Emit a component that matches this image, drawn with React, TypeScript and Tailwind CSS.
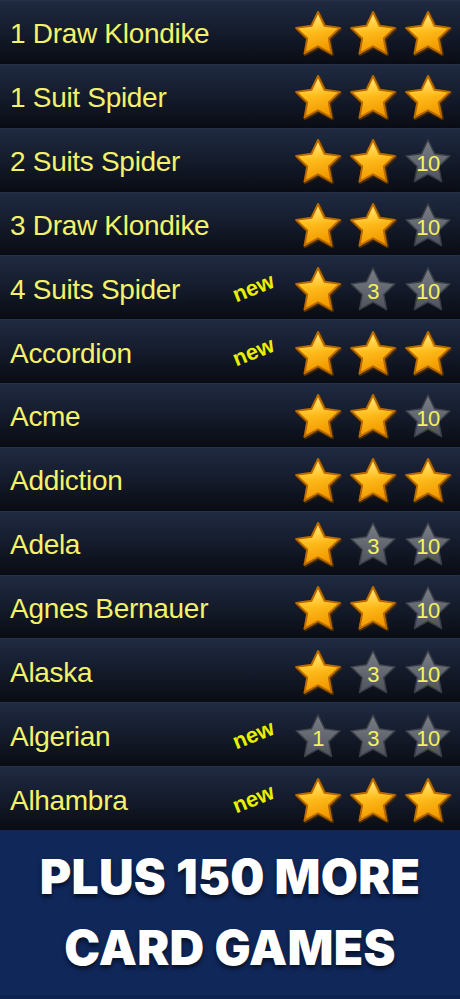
import React from "react";

type StarVal = "g" | number;

const rows: { name: string; isNew?: boolean; stars: StarVal[] }[] = [
  { name: "1 Draw Klondike", stars: ["g", "g", "g"] },
  { name: "1 Suit Spider", stars: ["g", "g", "g"] },
  { name: "2 Suits Spider", stars: ["g", "g", 10] },
  { name: "3 Draw Klondike", stars: ["g", "g", 10] },
  { name: "4 Suits Spider", isNew: true, stars: ["g", 3, 10] },
  { name: "Accordion", isNew: true, stars: ["g", "g", "g"] },
  { name: "Acme", stars: ["g", "g", 10] },
  { name: "Addiction", stars: ["g", "g", "g"] },
  { name: "Adela", stars: ["g", 3, 10] },
  { name: "Agnes Bernauer", stars: ["g", "g", 10] },
  { name: "Alaska", stars: ["g", 3, 10] },
  { name: "Algerian", isNew: true, stars: [1, 3, 10] },
  { name: "Alhambra", isNew: true, stars: ["g", "g", "g"] },
];

const STAR =
  "50,4 63.8,32.8 95.6,37.2 72.4,59.3 78.2,90.8 50,75.5 21.8,90.8 27.6,59.3 4.4,37.2 36.2,32.8";

function GoldStar() {
  return (
    <svg viewBox="0 0 100 100" className="w-[48px] h-[48px]">
      <defs>
        <linearGradient id="gg" x1="0" y1="0" x2="0.3" y2="1">
          <stop offset="0" stopColor="#ffdc5a" />
          <stop offset="0.5" stopColor="#ffbf1e" />
          <stop offset="1" stopColor="#f29a00" />
        </linearGradient>
        <linearGradient id="gh" x1="0" y1="0" x2="0" y2="1">
          <stop offset="0" stopColor="#fff3b0" stopOpacity="0.9" />
          <stop offset="1" stopColor="#ffe070" stopOpacity="0" />
        </linearGradient>
      </defs>
      <polygon points={STAR} fill="#5a3400" stroke="#5a3400" strokeWidth="7" strokeLinejoin="round" transform="translate(1.5,2)" opacity="0.7" />
      <polygon points={STAR} fill="url(#gg)" stroke="#b86a00" strokeWidth="4" strokeLinejoin="round" />
      <polygon points="50,12 60,36 86,39 50,48 14,39 40,36" fill="url(#gh)" opacity="0.6" />
    </svg>
  );
}

function GreyStar({ n }: { n: number }) {
  return (
    <div className="relative w-[48px] h-[48px]">
      <svg viewBox="0 0 100 100" className="w-[48px] h-[48px]">
        <defs>
          <linearGradient id="sg" x1="0" y1="0" x2="0" y2="1">
            <stop offset="0" stopColor="#7a7e86" />
            <stop offset="1" stopColor="#4e525a" />
          </linearGradient>
        </defs>
        <polygon points={STAR} fill="url(#sg)" stroke="#3b3f47" strokeWidth="3" strokeLinejoin="round" />
      </svg>
      <span className="absolute inset-0 flex items-center justify-center pt-[4px] text-[22px] leading-none text-[#f4f15e] tracking-[-0.5px] [font-family:'Liberation_Sans',Arial,sans-serif]">
        {n}
      </span>
    </div>
  );
}

export default function App() {
  return (
    <div className="w-[460px] h-[999px] flex flex-col bg-[#0a0e17] overflow-hidden">
      <div className="grid grid-rows-[repeat(13,1fr)] h-[830px]">
        {rows.map((r) => (
          <div
            key={r.name}
            className="flex items-center bg-gradient-to-b from-[#1f2a42] via-[#141b2b] to-[#090c14] border-t border-[#25314a]"
          >
            <div className="flex-1 pl-[10px] pt-[4px] text-[28px] tracking-[-0.3px] text-[#f3f26a] [font-family:'Liberation_Sans',Arial,sans-serif] leading-none">
              {r.name}
            </div>
            <div className="w-[60px] flex justify-center">
              {r.isNew && (
                <span className="-rotate-[22deg] inline-block text-[22px] font-bold text-[#e8f000] [font-family:'Liberation_Sans',Arial,sans-serif] leading-none mr-[22px]">
                  new
                </span>
              )}
            </div>
            <div className="flex items-center gap-[7px] pr-[8px] pt-[4px]">
              {r.stars.map((s, i) =>
                s === "g" ? <GoldStar key={i} /> : <GreyStar key={i} n={s} />
              )}
            </div>
          </div>
        ))}
      </div>
      <div className="flex-1 bg-[#10275a] flex flex-col items-center justify-center border-b-[4px] border-[#0e2250] pb-[2px]">
        <div className="text-white text-[48px] font-black uppercase leading-[71px] tracking-[0.3px] [font-family:Inter,sans-serif] [text-shadow:0_3px_4px_rgba(0,0,0,0.6)]">
          Plus 150 More
        </div>
        <div className="text-white text-[48px] font-black uppercase leading-[71px] tracking-[0.3px] [font-family:Inter,sans-serif] [text-shadow:0_3px_4px_rgba(0,0,0,0.6)]">
          Card Games
        </div>
      </div>
    </div>
  );
}
